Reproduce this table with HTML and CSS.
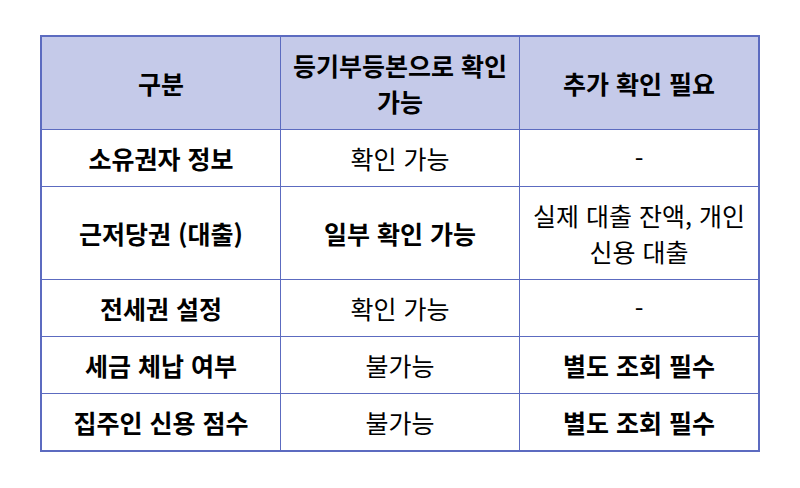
FILE: index.html
```html
<!DOCTYPE html>
<html lang="ko">
<head>
<meta charset="utf-8">
<link rel="stylesheet" href="styles.css">
</head>
<body>
<table class="info-table">
  <thead>
    <tr>
      <th>구분</th>
      <th>등기부등본으로 확인 가능</th>
      <th>추가 확인 필요</th>
    </tr>
  </thead>
  <tbody>
    <tr>
      <td class="label">소유권자 정보</td>
      <td>확인 가능</td>
      <td>-</td>
    </tr>
    <tr>
      <td class="label">근저당권 (대출)</td>
      <td class="strong">일부 확인 가능</td>
      <td>실제 대출 잔액, 개인 신용 대출</td>
    </tr>
    <tr>
      <td class="label">전세권 설정</td>
      <td>확인 가능</td>
      <td>-</td>
    </tr>
    <tr>
      <td class="label">세금 체납 여부</td>
      <td>불가능</td>
      <td class="strong">별도 조회 필수</td>
    </tr>
    <tr>
      <td class="label">집주인 신용 점수</td>
      <td>불가능</td>
      <td class="strong">별도 조회 필수</td>
    </tr>
  </tbody>
</table>
</body>
</html>
```
FILE: styles.css
```css
html, body {
  margin: 0;
  padding: 0;
  background: #ffffff;
}
body {
  font-family: "Noto Sans CJK KR", "Noto Sans", sans-serif;
  color: #000000;
}
.info-table {
  width: 720px;
  margin: 35px auto 0;
  border-collapse: collapse;
  table-layout: fixed;
  border: 2px solid #5c6bc0;
  font-size: 25px;
  line-height: 36px;
  word-break: keep-all;
}
.info-table th,
.info-table td {
  border: 1px solid #5c6bc0;
  padding: 10px 8px;
  text-align: center;
  vertical-align: middle;
}
.info-table th {
  background: #c5cae9;
  font-weight: 700;
}
.info-table td {
  font-weight: 400;
}
.info-table td.label,
.info-table td.strong {
  font-weight: 700;
}
```
